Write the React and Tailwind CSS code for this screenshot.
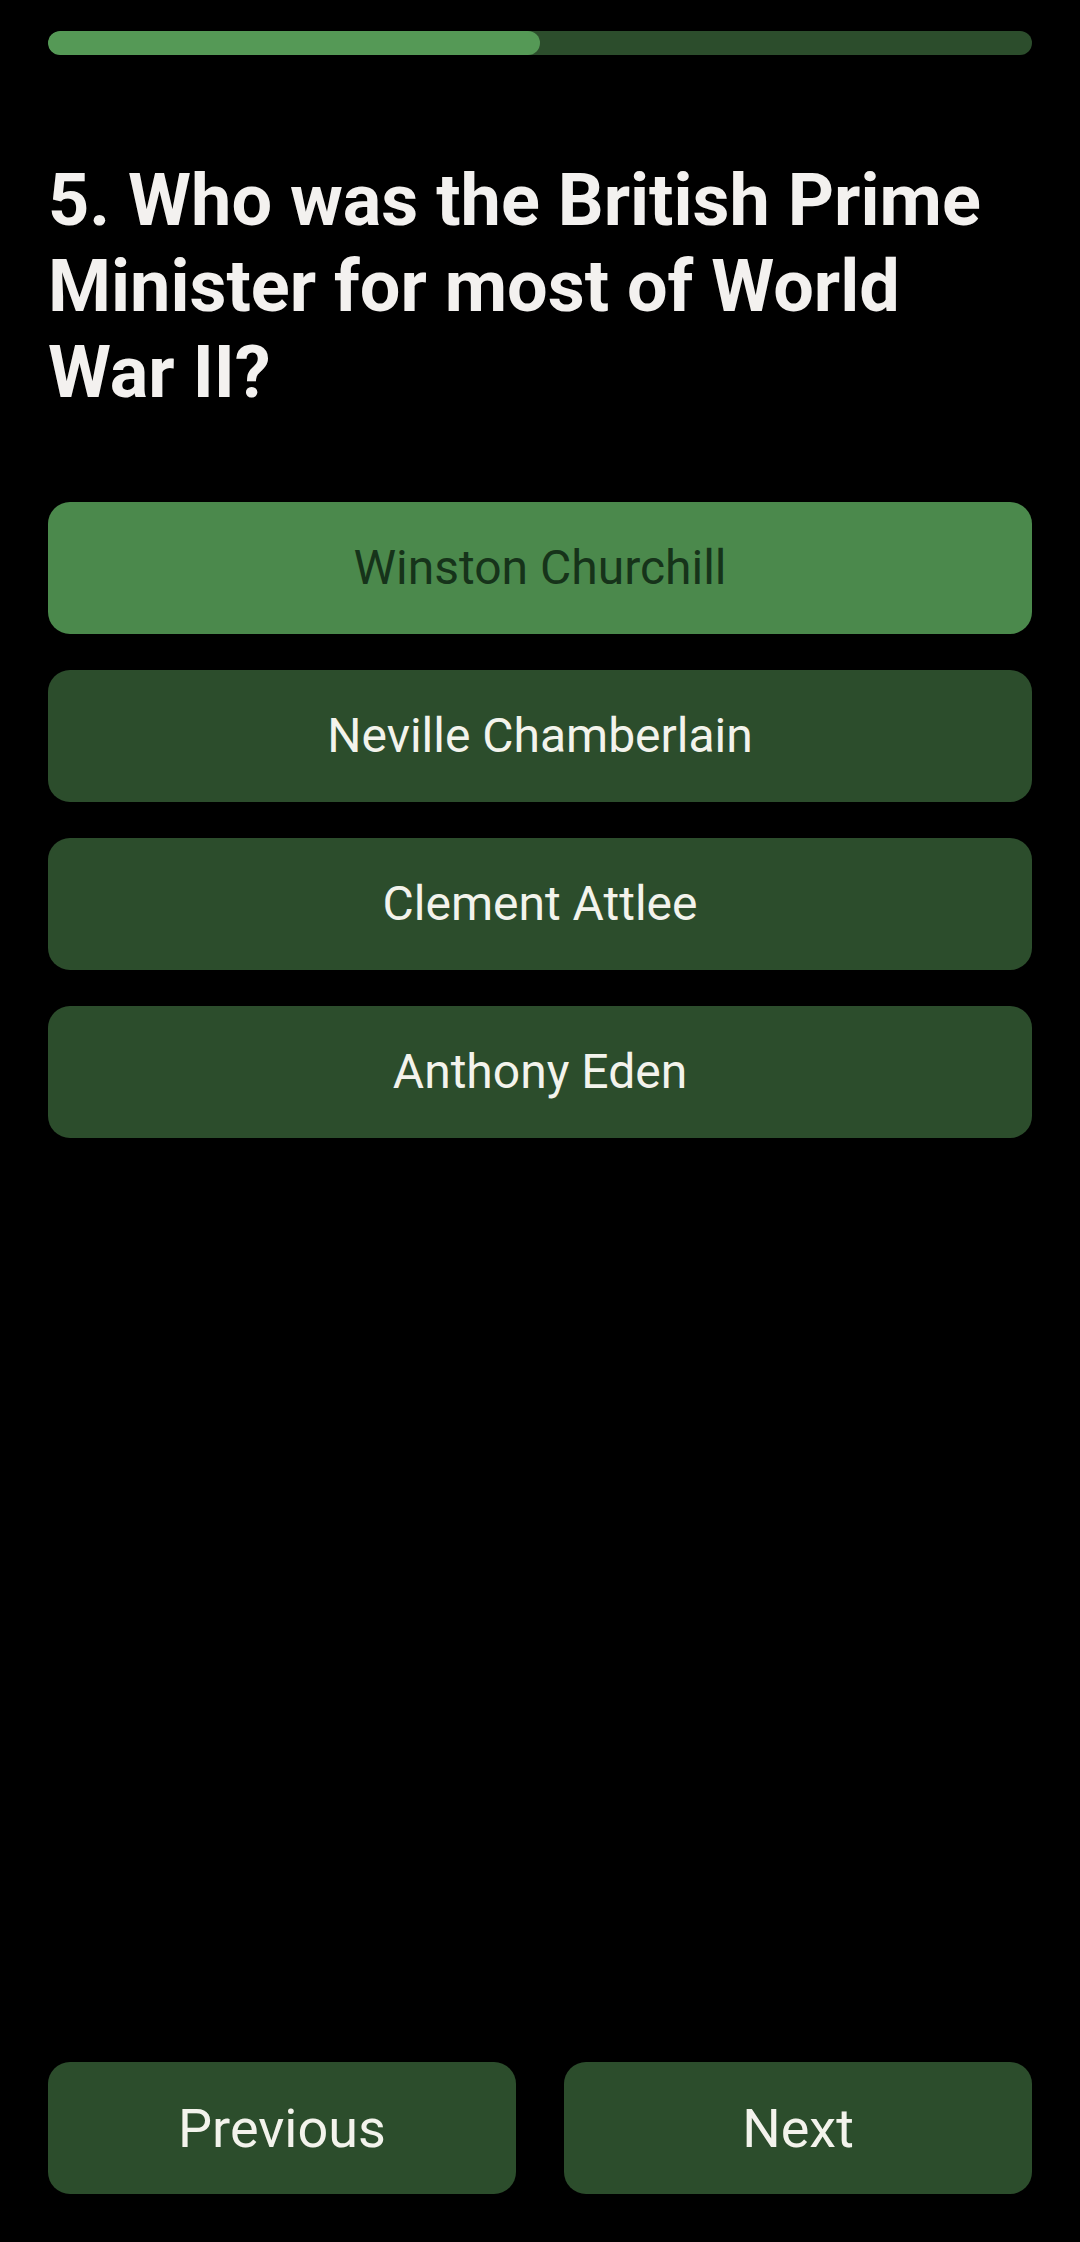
import React from "react";

const answers = ["Winston Churchill", "Neville Chamberlain", "Clement Attlee", "Anthony Eden"];

export default function App() {
  const selected = 0;
  return (
    <div className="flex h-[2242px] w-[1080px] flex-col bg-black px-12 font-['Roboto',sans-serif]">
      <div className="mt-[31px] h-6 w-full overflow-hidden rounded-full bg-[#2c4d2c]">
        <div className="h-full rounded-full bg-[#559956]" style={{ width: "50%" }} />
      </div>
      <h1 className="mt-[103px] text-[72px] font-bold leading-[86px] text-[#f3f1ef]">
        5. Who was the British Prime Minister for most of World War II?
      </h1>
      <div className="mt-[86px] flex flex-col gap-9">
        {answers.map((a, i) => (
          <button
            key={a}
            className={
              i === selected
                ? "flex h-[132px] items-center justify-center rounded-[22px] bg-[#4b894c] text-[48px] text-[#16331a]"
                : "flex h-[132px] items-center justify-center rounded-[22px] bg-[#2c4d2c] text-[48px] text-[#f3f3ec]"
            }
          >
            {a}
          </button>
        ))}
      </div>
      <div className="mt-auto mb-12 grid grid-cols-2 gap-12">
        <button className="flex h-[132px] items-center justify-center rounded-[22px] bg-[#2c4d2c] text-[54px] text-[#f3f3ec]">
          Previous
        </button>
        <button className="flex h-[132px] items-center justify-center rounded-[22px] bg-[#2c4d2c] text-[54px] text-[#f3f3ec]">
          Next
        </button>
      </div>
    </div>
  );
}
